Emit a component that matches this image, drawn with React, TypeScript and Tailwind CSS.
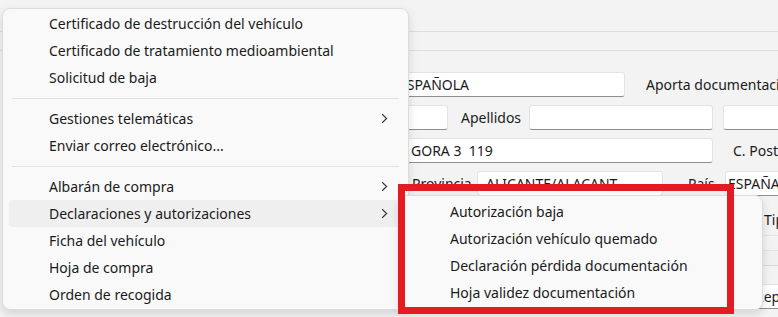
import React from "react";

const font = { fontFamily: '"Noto Sans", "Open Sans", sans-serif' };

type Item = { label: string; sub?: boolean; active?: boolean } | "sep";

const mainItems: Item[] = [
  { label: "Certificado de destrucción del vehículo" },
  { label: "Certificado de tratamiento medioambiental" },
  { label: "Solicitud de baja" },
  "sep",
  { label: "Gestiones telemáticas", sub: true },
  { label: "Enviar correo electrónico..." },
  "sep",
  { label: "Albarán de compra", sub: true },
  { label: "Declaraciones y autorizaciones", sub: true, active: true },
  { label: "Ficha del vehículo" },
  { label: "Hoja de compra" },
  { label: "Orden de recogida" },
];

const subItems = [
  "Autorización baja",
  "Autorización vehículo quemado",
  "Declaración pérdida documentación",
  "Hoja validez documentación",
];

function Chevron() {
  return (
    <svg width="7" height="11" viewBox="0 0 7 11" fill="none">
      <path d="M1.2 1.2 L5.6 5.5 L1.2 9.8" stroke="#3a3a3a" strokeWidth="1.2" />
    </svg>
  );
}

function Input({ className, text }: { className: string; text?: string }) {
  return (
    <div
      className={`shrink-0 h-[25px] bg-white border border-[#e3e3e3] border-b-[#8f8f8f] rounded-[3px] flex items-center pl-2 text-[14px] text-[#1b1b1b] overflow-hidden whitespace-pre ${className}`}
    >
      {text}
    </div>
  );
}

function Form() {
  return (
    <div className="w-[778px] h-[317px] bg-[#f3f3f3] flex flex-col overflow-hidden" style={font}>
      <div className="shrink-0 h-[32px] border-b border-[#dedede]" />
      <div className="shrink-0 h-[19px] border-b border-[#dedede]" />
      <div className="flex flex-col gap-[8px] pt-[21px] text-[14px] text-[#1b1b1b]">
        <div className="flex items-center">
          <Input className="ml-[390px] w-[235px]" text="ESPAÑOLA" />
          <span className="shrink-0 ml-[21px] whitespace-nowrap">Aporta documentación</span>
        </div>
        <div className="flex items-center">
          <Input className="ml-[390px] w-[58px]" />
          <span className="shrink-0 ml-[13px] w-[68px]">Apellidos</span>
          <Input className="w-[184px]" />
          <Input className="ml-[10px] w-[70px]" />
        </div>
        <div className="flex items-center">
          <Input className="ml-[402px] w-[311px]" text="GORA 3  119" />
          <span className="shrink-0 ml-[20px] whitespace-nowrap">C. Postal</span>
        </div>
        <div className="flex items-center">
          <span className="shrink-0 ml-[412px] w-[65px]">Provincia</span>
          <Input className="w-[186px]" text="ALICANTE/ALACANT" />
          <span className="shrink-0 ml-[25px] w-[37px]">País</span>
          <Input className="w-[70px] pl-[2px]" text="ESPAÑA" />
        </div>
        <div className="ml-[752px] flex flex-col">
          <div className="h-[32px] flex items-center pl-[12px] border-b border-[#e3e3e3] whitespace-nowrap">Tipo</div>
          <div className="h-[15px] border-b border-[#e3e3e3]" />
          <div className="h-[15px] border-b border-[#d8d8d8] bg-[#f0f0f0]" />
          <div className="h-[18px]" />
          <Input className="w-[60px] pl-[2px]" text="Repr" />
        </div>
      </div>
    </div>
  );
}

function MainMenu() {
  return (
    <div
      className="absolute left-[2px] top-[8px] w-[407px] bg-[#f9f9f9] border border-[#dcdcdc] rounded-[8px] shadow-[0_4px_10px_rgba(0,0,0,0.13)] py-[1px] text-[14px] text-[#1a1a1a]"
      style={font}
    >
      {mainItems.map((it, i) =>
        it === "sep" ? (
          <div key={i} className="h-[14px] flex items-center px-[9px]">
            <div className="h-px w-full bg-[#e2e2e2]" />
          </div>
        ) : (
          <div
            key={i}
            className={`h-[27px] mx-[6px] rounded-[4px] flex items-center pl-[40px] pr-[14px] ${
              it.active ? "bg-[#efefef]" : ""
            }`}
          >
            <span className="flex-1 whitespace-nowrap">{it.label}</span>
            {it.sub && <Chevron />}
          </div>
        )
      )}
    </div>
  );
}

function SubMenu() {
  return (
    <div
      className="absolute left-[399px] top-[195px] w-[364px] bg-[#f9f9f9] border border-[#dcdcdc] rounded-[8px] shadow-[0_4px_10px_rgba(0,0,0,0.13)] pt-[2px] pb-[3px] text-[14px] text-[#1a1a1a]"
      style={font}
    >
      {subItems.map((s) => (
        <div key={s} className="h-[27px] mx-[6px] rounded-[4px] flex items-center pl-[44px] whitespace-nowrap">
          {s}
        </div>
      ))}
    </div>
  );
}

export default function App() {
  return (
    <div className="relative w-[778px] h-[317px] overflow-hidden">
      <Form />
      <MainMenu />
      <SubMenu />
      <div className="absolute left-[398px] top-[184px] w-[336px] h-[130px] border-[7px] border-[#e31b23]" />
    </div>
  );
}
